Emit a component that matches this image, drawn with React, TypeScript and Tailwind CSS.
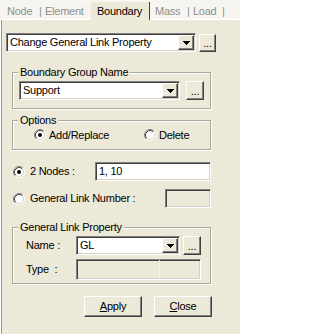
import type { ReactNode } from "react";

const sunken =
  "border border-t-[#808080] border-l-[#808080] border-r-white border-b-white shadow-[inset_1px_1px_0_#404040,inset_-1px_-1px_0_#d4d0c8]";
const raised =
  "border border-t-white border-l-white border-r-[#404040] border-b-[#404040] shadow-[inset_-1px_-1px_0_#808080] bg-[#ece9d8]";

function Arrow() {
  return (
    <svg width="7" height="4" viewBox="0 0 7 4" shapeRendering="crispEdges">
      <rect x="0" y="0" width="7" height="1" fill="#000" />
      <rect x="1" y="1" width="5" height="1" fill="#000" />
      <rect x="2" y="2" width="3" height="1" fill="#000" />
      <rect x="3" y="3" width="1" height="1" fill="#000" />
    </svg>
  );
}

function Combo({ value, className }: { value: string; className: string }) {
  return (
    <div className={`${sunken} bg-white flex items-stretch h-[19px] ${className}`}>
      <div className="flex-1 flex items-center pl-[3px] whitespace-nowrap overflow-hidden">{value}</div>
      <div className={`${raised} w-[16px] m-px flex items-center justify-center`}>
        <Arrow />
      </div>
    </div>
  );
}

function Dots({ className }: { className: string }) {
  return (
    <div className={`${raised} flex items-center justify-center ${className}`}>
      <span className="pt-[1px]">...</span>
    </div>
  );
}

function Radio({ checked }: { checked?: boolean }) {
  return (
    <svg width="12" height="12" viewBox="0 0 12 12" className="shrink-0">
      <circle cx="6" cy="6" r="5" fill="#fff" />
      <path d="M2.11 9.89A5.5 5.5 0 0 1 9.89 2.11" stroke="#808080" fill="none" />
      <path d="M9.89 2.11A5.5 5.5 0 0 1 2.11 9.89" stroke="#fff" fill="none" />
      <path d="M2.82 9.18A4.5 4.5 0 0 1 9.18 2.82" stroke="#404040" fill="none" />
      <path d="M9.18 2.82A4.5 4.5 0 0 1 2.82 9.18" stroke="#d4d0c8" fill="none" />
      {checked && <circle cx="6" cy="6" r="2" fill="#000" />}
    </svg>
  );
}

function Group({ title, className, children }: { title: string; className: string; children: ReactNode }) {
  return (
    <fieldset
      className={`w-[199px] ml-[6px] border border-[#aca899] shadow-[inset_1px_1px_0_#fff,1px_1px_0_#fff] ${className}`}
    >
      <legend className="ml-[5px] px-[2px] bg-[#ece9d8] leading-[13px]">{title}</legend>
      {children}
    </fieldset>
  );
}

export default function App() {
  return (
    <div className="w-[240px] h-[334px] overflow-hidden flex flex-col bg-[#ece9d8] text-black text-[11px] leading-[13px] tracking-[-0.25px] font-['Liberation_Sans',Arial,sans-serif]">
      {/* tab strip */}
      <div className="flex h-[20px] bg-[#f6f5f0] text-[#8f8f8f] border-b border-white">
        <div className="w-[39px] pl-[7px] pt-[5px]">Node</div>
        <div className="w-[6px] pt-[5px]">|</div>
        <div className="w-[46px] pt-[5px]">Element</div>
        <div className="relative w-[59px] mt-[2px] -mb-px pl-[6px] pt-[3px] bg-[#ece9d8] text-black border-r border-[#404040]">
          Boundary
        </div>
        <div className="w-[37px] pl-[5px] pt-[5px]">Mass</div>
        <div className="w-[6px] pt-[5px]">|</div>
        <div className="w-[29px] pt-[5px]">Load</div>
        <div className="pt-[5px]">|</div>
      </div>

      {/* page */}
      <div className="flex-1 flex flex-col ml-px pl-[4px] border-l border-[#9d9a8a] shadow-[-1px_0_0_#fff]">
        <div className="mt-[13px] flex items-center gap-[3px]">
          <Combo value="Change General Link Property" className="w-[190px]" />
          <Dots className="w-[17px] h-[18px]" />
        </div>

        <Group title="Boundary Group Name" className="mt-[14px] pb-[8px]">
          <div className="flex items-center gap-[6px] ml-[6px] mt-[2px]">
            <Combo value="Support" className="w-[161px]" />
            <Dots className="w-[18px] h-[19px]" />
          </div>
        </Group>

        <Group title="Options" className="mt-[5px] pb-[6px]">
          <div className="flex items-center h-[16px] ml-[21px]">
            <label className="w-[110px] flex items-center gap-[3px]">
              <Radio checked />
              <span>Add/Replace</span>
            </label>
            <label className="flex items-center gap-[3px]">
              <Radio />
              <span>Delete</span>
            </label>
          </div>
        </Group>

        <div className="mt-[12px] flex items-center h-[19px]">
          <label className="ml-[7px] w-[82px] flex items-center gap-[5px]">
            <Radio checked />
            <span>2 Nodes :</span>
          </label>
          <div className={`${sunken} bg-white w-[116px] h-[19px] flex items-center pl-[3px]`}>1, 10</div>
        </div>

        <div className="mt-[8px] flex items-center h-[19px]">
          <label className="ml-[7px] w-[152px] flex items-center gap-[5px]">
            <Radio />
            <span>General Link Number :</span>
          </label>
          <div className={`${sunken} bg-[#ece9d8] w-[46px] h-[19px]`} />
        </div>

        <Group title="General Link Property" className="mt-[13px] pb-[3px]">
          <div className="flex items-center h-[19px] mt-[2px]">
            <span className="ml-[13px] w-[50px]">Name :</span>
            <Combo value="GL" className="w-[104px]" />
            <Dots className="ml-[3px] w-[18px] h-[19px]" />
          </div>
          <div className="flex items-center h-[21px] mt-[4px]">
            <span className="ml-[13px] w-[50px]">Type&nbsp;&nbsp;:</span>
            <div className={`${sunken} bg-[#ece9d8] w-[125px] h-[21px] flex`}>
              <div className="w-[83px] border-r border-[#f4f3ec]" />
            </div>
          </div>
        </Group>

        <div className="mt-[12px] ml-[78px] flex gap-[12px]">
          <button className={`${raised} w-[58px] h-[21px] flex items-center justify-center`}>
            <span>
              <span className="underline">A</span>pply
            </span>
          </button>
          <button className={`${raised} w-[58px] h-[21px] flex items-center justify-center`}>
            <span>
              <span className="underline">C</span>lose
            </span>
          </button>
        </div>
      </div>
    </div>
  );
}
